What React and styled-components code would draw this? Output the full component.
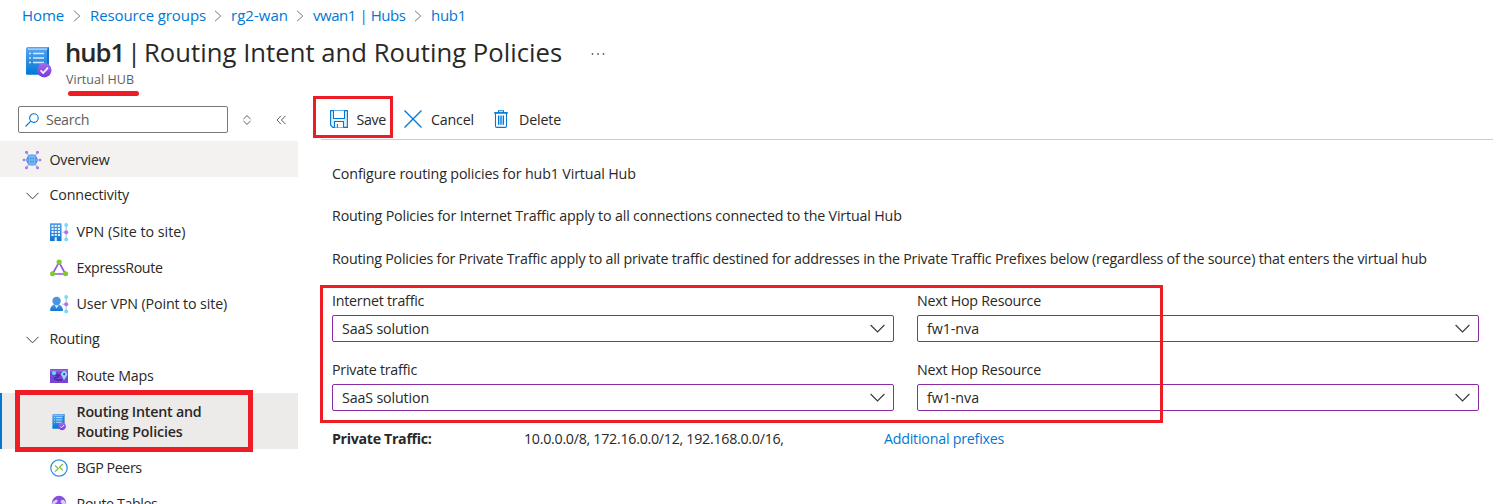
import React from 'react';
import styled, { createGlobalStyle, css } from 'styled-components';

const BLUE = '#0078d4';
const INK = '#292827';

const GlobalStyle = createGlobalStyle`
  * { box-sizing: border-box; }
  html, body { margin: 0; height: 504px; overflow: hidden; background: #fff; }
  body { font-family: "Open Sans", "Noto Sans", sans-serif; font-size: 14.25px; color: ${INK}; }
`;

const Text = styled.span`
  white-space: nowrap;
  letter-spacing: ${p => p.$track || 0}px;
`;

const Page = styled.div`
  position: relative;
  width: 1493px;
  height: 504px;
  overflow: hidden;
  background: #fff;
`;

const Breadcrumb = styled.nav`
  display: flex;
  align-items: center;
  height: 31px;
  padding-left: 22px;
`;
const Crumb = styled.a`
  flex: none;
  width: ${p => p.$width}px;
  font-size: 15px;
  line-height: 31px;
  letter-spacing: ${p => p.$track || 0}px;
  white-space: nowrap;
  color: ${BLUE};
`;
const CrumbArrow = styled.svg`
  flex: none;
  width: 8px;
  height: 12px;
  margin: 0 9px 0 8px;
  fill: none;
  stroke: #7a7876;
  stroke-width: 1;
`;

const Header = styled.header`
  display: flex;
  height: 65px;
  padding: 0 0 0 24px;
`;
const HeaderIcon = styled.div`
  width: 41px;
  padding-top: 14px;
  svg { display: block; width: 29px; height: 34px; }
`;
const Title = styled.h1`
  display: flex;
  margin: 0;
  height: 40px;
  line-height: 43px;
  font-size: 25.65px;
  font-weight: 400;
  white-space: nowrap;
`;
const TitleName = styled.span`
  width: 62px;
  font-weight: 600;
  letter-spacing: -1px;
`;
const TitleBar = styled.span`
  width: 17px;
`;
const TitlePage = styled.span`
  letter-spacing: 0.03px;
`;
const Subtitle = styled.div`
  padding-left: 1px;
  font-size: 12.5px;
  line-height: 18px;
  letter-spacing: 0.04px;
  color: #605e5c;
`;
const More = styled.svg`
  width: 14px;
  height: 4px;
  margin: 21px 0 0 29px;
  fill: #605e5c;
`;

const Body = styled.div`
  display: flex;
  height: 408px;
`;
const Sidebar = styled.aside`
  width: 298px;
  flex: none;
`;
const SearchRow = styled.div`
  display: flex;
  align-items: center;
  height: 45px;
  padding: 0 0 0 18px;
`;
const SearchBox = styled.div`
  display: flex;
  align-items: center;
  width: 210px;
  height: 27px;
  margin-top: 2px;
  padding-left: 6px;
  border: 1px solid #7b7977;
  border-radius: 2px;
  color: #605e5c;
  svg { margin-right: 7px; }
`;
const SmallGlyph = styled.svg`
  width: ${p => p.$size}px;
  height: ${p => p.$size}px;
  margin: 3px 0 0 ${p => p.$gap}px;
  fill: none;
  stroke: #605e5c;
  stroke-width: 1;
`;

const NavRow = styled.div`
  display: flex;
  align-items: center;
  height: ${p => (p.$tall ? 56 : 36)}px;
  padding-left: ${p => (p.$nested ? 50 : 23)}px;
  line-height: 20px;
  ${p => p.$hover && css`background: #f3f2f1;`}
  ${p => p.$selected && css`
    background: #edebe9;
    box-shadow: inset 2px 0 0 ${BLUE};
    font-weight: 600;
  `}
`;
const NavIcon = styled.span`
  display: flex;
  align-items: center;
  justify-content: center;
  width: 18px;
  height: 18px;
  margin: 1px 8.5px 0 0;
  svg { overflow: visible; }
`;
const NavLabel = styled.div`
  display: flex;
  flex-direction: column;
  padding-top: ${p => (p.$raise ? 0 : 2)}px;
`;

const Main = styled.main`
  flex: 1;
  padding-left: 23px;
`;
const Toolbar = styled.div`
  display: flex;
  align-items: center;
  height: 44px;
  padding: 3px 0 0 9px;
  border-bottom: 1px solid #cfcdcb;
`;
const Command = styled.button`
  display: flex;
  align-items: center;
  flex: none;
  width: ${p => p.$width}px;
  padding: 0;
  border: 0;
  background: none;
  color: ${INK};
  font: inherit;
  svg { flex: none; width: 18px; height: 18px; margin-right: ${p => p.$gap}px; }
`;

const Content = styled.div`
  padding: 12.9px 14px 0 11px;
`;
const Paragraph = styled.p`
  margin: 0;
  height: 42.5px;
  line-height: 42.5px;
  white-space: nowrap;
  letter-spacing: ${p => p.$track}px;
`;
const PolicyGrid = styled.div`
  display: grid;
  grid-template-columns: 562px 562px;
  column-gap: 23px;
  row-gap: 21px;
  padding-top: 13.6px;
`;
const Field = styled.label`
  display: flex;
  flex-direction: column;
`;
const FieldLabel = styled.span`
  height: 21px;
  line-height: 14px;
  letter-spacing: -0.24px;
`;
const Select = styled.div`
  display: flex;
  align-items: center;
  justify-content: space-between;
  height: 27px;
  padding: 0 8px 0 9px;
  border: 1px solid #8a2da5;
  border-radius: 2px;
`;
const PrefixRow = styled.div`
  display: grid;
  grid-template-columns: 192px 360px auto;
  height: 56px;
  line-height: 56px;
`;
const PrefixLabel = styled.strong`
  font-weight: 700;
  letter-spacing: -0.34px;
`;
const PrefixLink = styled.a`
  color: ${BLUE};
  letter-spacing: -0.23px;
`;

const Highlight = styled.div`
  position: absolute;
  left: ${p => p.$x}px;
  top: ${p => p.$y}px;
  width: ${p => p.$w}px;
  height: ${p => p.$h}px;
  border: ${p => p.$line}px solid #ee1c25;
  pointer-events: none;
`;
const Underline = styled.div`
  position: absolute;
  left: 68px;
  top: 91px;
  width: 71px;
  height: 5px;
  border-radius: 2.5px;
  background: #ee1c25;
`;

const Chevron = ({ w = 15 }) => (
  <svg width={w} height={w * 0.6} viewBox="0 0 15 9" fill="none" stroke="#3b3a39" strokeWidth="1.15">
    <path d="M0.6 1 L7.5 7.9 L14.4 1" />
  </svg>
);

const PolicyIcon = ({ id, w = 16 }) => (
  <svg width={w} height="18" viewBox="0 0 29 34">
    <defs>
      <linearGradient id={id} x1="0" y1="0" x2="0" y2="1">
        <stop offset="0" stopColor="#5aa5f2" />
        <stop offset="1" stopColor="#0078d4" />
      </linearGradient>
      <linearGradient id={id + 'b'} x1="0" y1="0" x2="0" y2="1">
        <stop offset="0" stopColor="#a56bf0" />
        <stop offset="1" stopColor="#773adc" />
      </linearGradient>
    </defs>
    <path d="M4.5 2 H24 a1 1 0 0 1 1 1 V27 H4 Z" fill="#1a6fc4" />
    <path d="M4 4 H23 V29.7 H3 a1 1 0 0 1-1-1 V4 a2 2 0 0 1 2-2 H24 V3.2 H4 Z" fill={`url(#${id})`} />
    <path d="M4 3.2 H23.3 V5 H4 Z" fill="#9fd0fb" />
    <path d="M5 8.6h2M5 13.1h2M5 17.6h2M9 8.6h11M9 13.1h11M9 17.6h11" stroke="#d5eaff" strokeWidth="1.5" />
    <circle cx="20.3" cy="25.2" r="7.2" fill={`url(#${id}b)`} />
    <path d="M16.6 25.4 l2.6 2.6 l4.8-5.4" fill="none" stroke="#fff" strokeWidth="1.6" />
  </svg>
);

const HubIcon = () => (
  <svg width="18" height="18" viewBox="0 0 18 18">
    <path d="M9 9 L3.5 1.5 M9 9 L14.5 1.5 M9 9 L3.5 16.5 M9 9 L14.5 16.5 M1 9 H17" stroke="#a3a4e8" strokeWidth="1.1" />
    <circle cx="9" cy="9" r="5.7" fill="#3c91e0" />
    <path d="M3.6 9h10.8M4.5 6h9M4.5 12h9M9 3.4v11.2" stroke="#9cd0fa" strokeWidth="0.7" />
    <ellipse cx="9" cy="9" rx="2.8" ry="5.5" fill="none" stroke="#9cd0fa" strokeWidth="0.7" />
    <g fill="#a874f0">
      <circle cx="3.5" cy="1.3" r="1.5" /><circle cx="14.5" cy="1.3" r="1.5" />
      <circle cx="3.5" cy="16.7" r="1.5" /><circle cx="14.5" cy="16.7" r="1.5" />
      <circle cx="1" cy="9" r="1.3" /><circle cx="17" cy="9" r="1.3" />
    </g>
  </svg>
);

const Nodes = () => (
  <g>
    <path d="M12.5 9.2H16M16.2 2.5V16" stroke="#a9b0c4" strokeWidth="0.9" />
    <circle cx="16.2" cy="2" r="1.9" fill="#6bdff8" />
    <circle cx="16.2" cy="9.2" r="2" fill="#a874f0" />
    <circle cx="16.2" cy="16.4" r="1.9" fill="#6bdff8" />
  </g>
);

const SiteIcon = () => (
  <svg width="18" height="18" viewBox="0 0 18 18">
    <defs>
      <linearGradient id="site" x1="0" y1="0" x2="0" y2="1">
        <stop offset="0" stopColor="#5a9cea" /><stop offset="1" stopColor="#0f75d0" />
      </linearGradient>
    </defs>
    <rect x="0" y="0.2" width="11.5" height="17.8" rx="0.6" fill="url(#site)" />
    <g fill="#e6f2ff">
      {[2, 5, 8, 11].map(y => [1.5, 4.7, 7.9].map(x => <rect key={`${x}-${y}`} x={x} y={y} width="2.1" height="2" />))}
      <rect x="4.7" y="14.3" width="2.1" height="3.7" />
    </g>
    <Nodes />
  </svg>
);

const ExpressRouteIcon = () => (
  <svg width="18" height="18" viewBox="0 0 18 18">
    <path d="M9 3.3 L2.5 15 H15.5 Z" fill="none" stroke="#8f5be6" strokeWidth="1.7" />
    <g fill="#7fca28">
      <circle cx="9.1" cy="3" r="2.6" /><circle cx="2.5" cy="14.8" r="2.5" /><circle cx="15.6" cy="14.8" r="2.5" />
    </g>
  </svg>
);

const UserIcon = () => (
  <svg width="18" height="18" viewBox="0 0 18 18">
    <defs>
      <linearGradient id="user" x1="0" y1="0" x2="0" y2="1">
        <stop offset="0" stopColor="#4f9bea" /><stop offset="1" stopColor="#0f75d0" />
      </linearGradient>
    </defs>
    <path d="M0 15.2 C0.6 11 2.8 9.3 6.5 9.3 S12.4 11 13 15.2 Q13 16 12 16 H1 Q0 16 0 15.2 Z" fill="url(#user)" />
    <path d="M4.3 9.6 L6.6 13.6 L8.9 9.6 Z" fill="#d7eafc" />
    <circle cx="6.6" cy="6" r="4.2" fill="#4793e4" />
    <Nodes />
  </svg>
);

const MapIcon = () => (
  <svg width="18" height="18" viewBox="0 0 18 18">
    <rect x="0" y="2" width="18" height="14" rx="0.6" fill="#7a43d8" />
    <path d="M0 2.6 h18 v2 h-18z" fill="#9c68ea" />
    <circle cx="4" cy="6" r="2.1" fill="#50e6ff" />
    <path d="M5.5 8.2 C11 7 10 9.8 6.5 10.3 S4.5 13.2 8 13 H12" fill="none" stroke="#2d1464" strokeWidth="1" />
    <path d="M14 13.2 L11.8 9 A3 3 0 1 1 16.6 9 Z" fill="#8fdcfa" />
    <circle cx="14.2" cy="7.2" r="1.1" fill="#5c2cb8" />
  </svg>
);

const PeerIcon = () => (
  <svg width="18" height="18" viewBox="0 0 18 18" fill="none">
    <circle cx="9" cy="9" r="8.2" stroke="#2f8fdc" strokeWidth="1.2" />
    <path d="M5 6.4 L8.2 9.5 L5 12.6 M12.8 5 L9.6 8.2 L12.8 11.4" stroke="#78b83a" strokeWidth="1.2" />
  </svg>
);

const RouteTableIcon = () => (
  <svg width="18" height="18" viewBox="0 0 18 18">
    <circle cx="9" cy="8" r="7.2" fill="#8650dc" />
    <path d="M2 9 Q3 5 7 4.4 Q8.4 6 6.6 7.6 Q4.5 9.6 2 9 Z M10.5 7 Q11 4 13.8 5 Q15.8 6.4 16 9 Q12 10 10.5 7Z" fill="#dccbf8" />
  </svg>
);

const SaveIcon = () => (
  <svg viewBox="0 0 18 18" fill="none" stroke={BLUE} strokeWidth="1.1">
    <path d="M0.6 0.6 H17.4 V17.4 H2.8 L0.6 15.2 Z" fill="#e3f1fc" />
    <path d="M3.5 0.6 V8.5 H14.5 V0.6" fill="#fff" />
    <path d="M4.5 17.4 V11.5 H13.5 V17.4 M7.4 14 V17.4" fill="#fff" />
  </svg>
);
const CancelIcon = () => (
  <svg viewBox="0 0 18 18" fill="none" stroke={BLUE} strokeWidth="1.3">
    <path d="M0.5 0.5 L17.5 17.5 M17.5 0.5 L0.5 17.5" />
  </svg>
);
const DeleteIcon = () => (
  <svg viewBox="0 0 18 18" fill="none" stroke={BLUE} strokeWidth="1.1">
    <path d="M3.5 2.9 V16 Q3.5 17.4 4.9 17.4 H13.1 Q14.5 17.4 14.5 16 V2.9 Z" fill="#fff" />
    <path d="M6.5 5.6 H11.5 V14.8 H6.5 Z" fill="#a9d3f5" stroke="none" />
    <path d="M2 2.9 H16 M6.5 2.8 V0.7 H11.5 V2.8 M6.5 5.6 V14.8 M9 5.6 V14.8 M11.5 5.6 V14.8" />
  </svg>
);

const crumbs = [
  ['Home', 43, -0.1],
  ['Resource groups', 116, -0.1],
  ['rg2-wan', 57, 0.02],
  ['vwan1 | Hubs', 93, -0.45],
  ['hub1', 36, -0.29],
];

const navItems = [
  { label: [['Overview', -0.22]], icon: <HubIcon />, hover: true },
  { label: [['Connectivity', -0.16]], group: true },
  { label: [['VPN (Site to site)', 0]], icon: <SiteIcon />, nested: true },
  { label: [['ExpressRoute', -0.39]], icon: <ExpressRouteIcon />, nested: true },
  { label: [['User VPN (Point to site)', -0.13]], icon: <UserIcon />, nested: true },
  { label: [['Routing', -0.18]], group: true },
  { label: [['Route Maps', -0.21]], icon: <MapIcon />, nested: true },
  { label: [['Routing Intent and', -0.22], ['Routing Policies', -0.17]], icon: <PolicyIcon id="navPolicy" />, nested: true, selected: true },
  { label: [['BGP Peers', -0.43]], icon: <PeerIcon />, nested: true },
  { label: [['Route Tables', -0.4]], icon: <RouteTableIcon />, nested: true },
];

const paragraphs = [
  ['Configure routing policies for hub1 Virtual Hub', -0.13],
  ['Routing Policies for Internet Traffic apply to all connections connected to the Virtual Hub', -0.165],
  ['Routing Policies for Private Traffic apply to all private traffic destined for addresses in the Private Traffic Prefixes below (regardless of the source) that enters the virtual hub', -0.214],
];

const fields = [
  ['Internet traffic', 'SaaS solution', -0.14],
  ['Next Hop Resource', 'fw1-nva', -0.05],
  ['Private traffic', 'SaaS solution', -0.14],
  ['Next Hop Resource', 'fw1-nva', -0.05],
];

export default function App() {
  return (
    <Page>
      <GlobalStyle />
      <Breadcrumb>
        {crumbs.map(([label, width, track], i) => (
          <React.Fragment key={label}>
            {i > 0 && <CrumbArrow viewBox="0 0 8 12"><path d="M1 0.8 L6.8 6 L1 11.2" /></CrumbArrow>}
            <Crumb $width={width} $track={track}>{label}</Crumb>
          </React.Fragment>
        ))}
      </Breadcrumb>

      <Header>
        <HeaderIcon><PolicyIcon id="headPolicy" /></HeaderIcon>
        <div>
          <Title>
            <TitleName>hub1</TitleName>
            <TitleBar>|</TitleBar>
            <TitlePage>Routing Intent and Routing Policies</TitlePage>
          </Title>
          <Subtitle>Virtual HUB</Subtitle>
        </div>
        <More viewBox="0 0 14 4"><circle cx="1.5" cy="2" r="0.9" /><circle cx="7" cy="2" r="0.9" /><circle cx="12.5" cy="2" r="0.9" /></More>
      </Header>

      <Body>
        <Sidebar>
          <SearchRow>
            <SearchBox>
              <svg width="14" height="14" viewBox="0 0 14 14" fill="none" stroke={BLUE} strokeWidth="1.1">
                <circle cx="8.9" cy="5.1" r="4.3" /><path d="M5.8 8.2 L0.5 13.5" />
              </svg>
              <Text $track={-0.35}>Search</Text>
            </SearchBox>
            <SmallGlyph $size={10} $gap={13.5} viewBox="0 0 10 10"><path d="M1.5 4 L5 0.6 L8.5 4 M1.5 6 L5 9.4 L8.5 6" /></SmallGlyph>
            <SmallGlyph $size={10} $gap={24} viewBox="0 0 10 10"><path d="M5 0.8 L1 5 L5 9.2 M9.5 0.8 L5.5 5 L9.5 9.2" /></SmallGlyph>
          </SearchRow>
          {navItems.map(item => (
            <NavRow key={item.label[0][0]} $nested={item.nested} $hover={item.hover} $selected={item.selected} $tall={item.selected}>
              <NavIcon>{item.group ? <Chevron w={13} /> : item.icon}</NavIcon>
              <NavLabel $raise={item.group}>
                {item.label.map(([line, track]) => <Text key={line} $track={track}>{line}</Text>)}
              </NavLabel>
            </NavRow>
          ))}
        </Sidebar>

        <Main>
          <Toolbar>
            <Command $width={74} $gap={8.5}><SaveIcon /><Text $track={-0.38}>Save</Text></Command>
            <Command $width={88} $gap={9}><CancelIcon /><Text $track={-0.18}>Cancel</Text></Command>
            <Command $width={80} $gap={9}><DeleteIcon /><Text $track={-0.17}>Delete</Text></Command>
          </Toolbar>
          <Content>
            {paragraphs.map(([text, track]) => <Paragraph key={text} $track={track}>{text}</Paragraph>)}
            <PolicyGrid>
              {fields.map(([label, value, track], i) => (
                <Field key={i}>
                  <FieldLabel>{label}</FieldLabel>
                  <Select><Text $track={track}>{value}</Text><Chevron /></Select>
                </Field>
              ))}
            </PolicyGrid>
            <PrefixRow>
              <PrefixLabel>Private Traffic:</PrefixLabel>
              <Text $track={-0.28}>10.0.0.0/8, 172.16.0.0/12, 192.168.0.0/16,</Text>
              <PrefixLink>Additional prefixes</PrefixLink>
            </PrefixRow>
          </Content>
        </Main>
      </Body>

      <Underline />
      <Highlight $x={313} $y={96} $w={80} $h={42} $line={3} />
      <Highlight $x={320} $y={285} $w={843} $h={138} $line={3} />
      <Highlight $x={15} $y={390} $w={238} $h={62} $line={5} />
    </Page>
  );
}
